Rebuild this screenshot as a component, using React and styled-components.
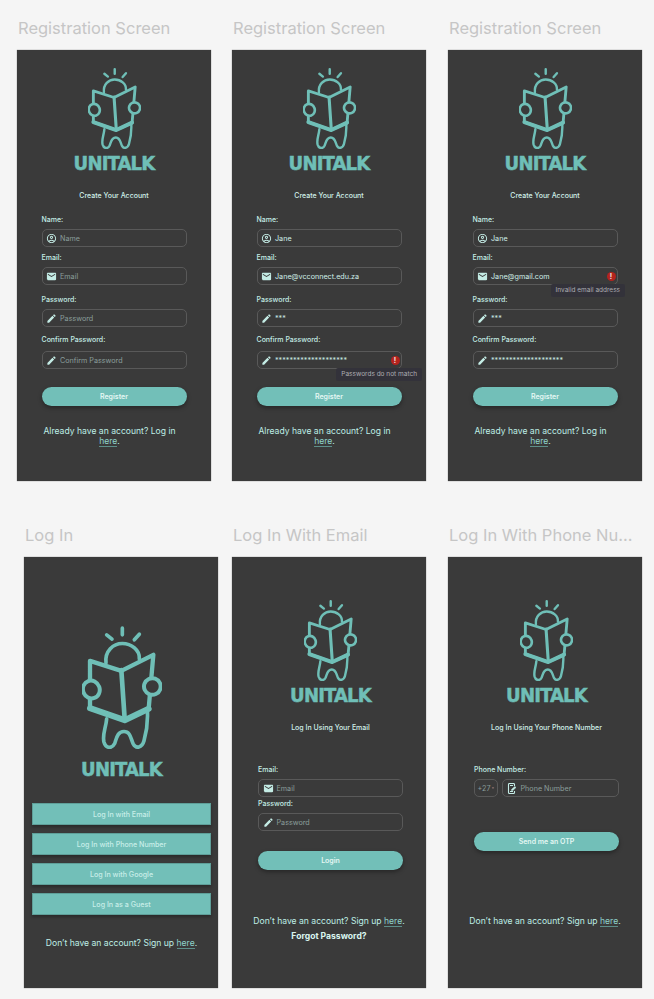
import React from "react";
import styled, { createGlobalStyle } from "styled-components";
import { MdOutlineAccountCircle, MdEmail, MdEdit, MdArrowDropDown } from "react-icons/md";

const GlobalStyle = createGlobalStyle`
  html, body {
    margin: 0;
    background: #f5f5f5;
  }
  body {
    font-family: "Inter", "Liberation Sans", sans-serif;
  }
`;

const Page = styled.div`
  width: 654px;
  height: 999px;
  overflow: hidden;
  padding-top: 17px;
  box-sizing: border-box;
`;

const Row = styled.div`
  display: grid;
  grid-template-columns: 215px 216px 194px;
  padding-left: 17px;
  margin-bottom: 43px;
`;

const Column = styled.section`
  width: 194px;
  margin-left: ${(p) => p.$indent || 0}px;
`;

const Title = styled.h2`
  margin: 0 0 11px 1px;
  height: 22px;
  font-size: 16.5px;
  line-height: 22px;
  font-weight: 400;
  color: #c6c6c6;
  white-space: nowrap;
`;

const Card = styled.div`
  height: 431px;
  box-sizing: border-box;
  background: #3a3a3a;
  box-shadow: 0 0 1px rgba(0, 0, 0, 0.55);
  padding: ${(p) => p.$top}px ${(p) => p.$right}px 0 ${(p) => p.$left}px;
  display: flex;
  flex-direction: column;
`;

const Brand = styled.div`
  display: flex;
  flex-direction: column;
  align-items: center;
`;

const LogoMark = styled.svg`
  width: ${(p) => p.$width}px;
  height: ${(p) => Math.round(p.$width * 1.533)}px;
  display: block;
`;

const Wordmark = styled.div`
  margin-top: ${(p) => p.$gap}px;
  height: 15px;
  font-family: "DejaVu Sans Condensed", "DejaVu Sans", sans-serif;
  font-stretch: condensed;
  font-weight: 700;
  font-size: 20px;
  line-height: 15px;
  letter-spacing: -0.8px;
  color: #6fbfb7;
  -webkit-text-stroke: 0.5px #6fbfb7;
  white-space: nowrap;
`;

const Heading = styled.h3`
  margin: 19px 0 0;
  padding-top: 1px;
  height: 9px;
  font-size: 7px;
  line-height: 10px;
  font-weight: 500;
  text-align: center;
  color: #d0efe9;
`;

const Field = styled.div`
  position: relative;
  margin-top: ${(p) => p.$top}px;
`;

const Label = styled.label`
  display: block;
  padding-top: 1px;
  font-size: 7px;
  line-height: 10px;
  font-weight: 500;
  color: #c4ece5;
  margin-bottom: ${(p) => (p.$gap ?? 5) - 1}px;
`;

const InputBox = styled.div`
  flex: 1;
  height: 18px;
  box-sizing: border-box;
  border: 1px solid #595959;
  border-radius: 5px;
  display: flex;
  align-items: center;
  padding: 0 1px 0 3.5px;
  font-size: 7.2px;
  color: ${(p) => (p.$filled ? "#d0efe9" : "#8a9e9a")};
  svg {
    flex: none;
    width: 11px;
    height: 11px;
    color: #c4ece5;
    margin-right: 3px;
  }
`;

const InputText = styled.span`
  flex: 1;
  white-space: nowrap;
`;

const ErrorBadge = styled.span`
  flex: none;
  width: 9px;
  height: 9px;
  border-radius: 50%;
  background: #b3231e;
  color: #f4e6e4;
  font-size: 7px;
  font-weight: 700;
  line-height: 9px;
  text-align: center;
`;

const Tooltip = styled.div`
  position: absolute;
  top: ${(p) => p.$top}px;
  right: ${(p) => p.$right}px;
  height: 13px;
  padding: 0 5px;
  border-radius: 2px;
  background: #33323a;
  color: #adadb2;
  font-size: 6.5px;
  line-height: 13px;
  white-space: nowrap;
`;

const PhoneRow = styled.div`
  display: flex;
  gap: 4px;
`;

const CodeBox = styled.div`
  width: 24px;
  height: 18px;
  box-sizing: border-box;
  border: 1px solid #595959;
  border-radius: 5px;
  display: flex;
  align-items: center;
  justify-content: center;
  font-size: 7.2px;
  color: #8a9e9a;
  svg {
    flex: none;
    width: 6px;
    height: 6px;
    margin-right: -2px;
    color: #b98f8a;
  }
`;

const PillButton = styled.button`
  display: block;
  width: 100%;
  height: 19px;
  margin-top: ${(p) => p.$top}px;
  padding: 0;
  border: 0;
  border-radius: 9.5px;
  background: #72bfb8;
  box-shadow: 0 2px 4px rgba(0, 0, 0, 0.35);
  color: #e4f7f3;
  font-family: inherit;
  font-size: 7px;
  font-weight: 600;
`;

const SquareButton = styled.button`
  display: block;
  width: 100%;
  height: 22px;
  padding: 0;
  border: 1px solid #5f9f99;
  background: #72bfb8;
  box-shadow: 0 2px 3px rgba(0, 0, 0, 0.3);
  color: #c8eee8;
  font-family: inherit;
  font-size: 7.1px;
  font-weight: 500;
`;

const ButtonStack = styled.div`
  display: flex;
  flex-direction: column;
  gap: 8px;
  margin-top: 26px;
`;

const FootNote = styled.p`
  margin: ${(p) => p.$top}px ${(p) => p.$right || 0}px 0 ${(p) => p.$left || 0}px;
  padding-top: 1px;
  height: 19px;
  font-size: 8.6px;
  line-height: 10px;
  text-align: center;
  color: #bfeee6;
`;

const HereLink = styled.a`
  color: #8fd3ca;
  border-bottom: 1px solid #5e8f8a;
`;

const ForgotLink = styled.p`
  margin: -4px 0 0 -3px;
  font-size: 8.6px;
  line-height: 10px;
  font-weight: 700;
  text-align: center;
  color: #d9f5ef;
`;

const PhoneIcon = () => (
  <svg viewBox="0 0 11 11" fill="none" stroke="currentColor" strokeWidth="1.1">
    <path d="M7.5 3V1.5C7.5 0.9 7.1 0.5 6.5 0.5H2.5C1.9 0.5 1.5 0.9 1.5 1.5V9.5C1.5 10.1 1.9 10.5 2.5 10.5H6.5C7.1 10.5 7.5 10.1 7.5 9.5V8" />
    <path d="M3 2.5H6M3 8.5H6" />
    <path d="M4.5 6.5L7.8 3.4L9 4.5L5.7 7.6H4.5Z" fill="currentColor" strokeWidth="0.5" />
  </svg>
);

const Logo = ({ width = 53, gap = 7 }) => (
  <Brand>
    <LogoMark $width={width} viewBox="66 14 240 368" fill="none" stroke="#6fbfb7" strokeLinecap="round" strokeLinejoin="round">
      <path d="M187 20V40M140 40L156 53M238 38L223 55" strokeWidth="11" />
      <path d="M138 124C134 88 160 66 187 66C214 66 240 86 238 112" strokeWidth="11" />
      <path d="M140 292C138 318 126 340 132 362C138 382 156 382 164 366C170 350 172 330 192 330C212 330 212 352 220 368C228 382 246 380 252 358C260 330 264 296 262 266" strokeWidth="11" />
      <path d="M90 118L184 148L280 100L266 262L194 296L90 260Z" fill="#3a3a3a" strokeWidth="13" />
      <path d="M184 146L194 292" strokeWidth="14" />
      <path d="M90 260L194 296L266 262" strokeWidth="18" />
      <ellipse cx="94" cy="204" rx="25" ry="27" transform="rotate(-20 94 204)" fill="#3a3a3a" strokeWidth="12" />
      <ellipse cx="277" cy="195" rx="25" ry="25" transform="rotate(20 277 195)" fill="#3a3a3a" strokeWidth="12" />
    </LogoMark>
    <Wordmark $gap={gap}>UNITALK</Wordmark>
  </Brand>
);

const Input = ({ icon, text, filled, error }) => (
  <InputBox $filled={filled}>
    {icon}
    <InputText>{text}</InputText>
    {error && <ErrorBadge>!</ErrorBadge>}
  </InputBox>
);

const RegisterScreen = ({ values = {}, emailError, passwordError }) => (
  <Column>
    <Title>Registration Screen</Title>
    <Card $top={18} $left={24.5} $right={24.5}>
      <Logo />
      <Heading>Create Your Account</Heading>
      <Field $top={14}>
        <Label>Name:</Label>
        <Input icon={<MdOutlineAccountCircle />} text={values.name || "Name"} filled={!!values.name} />
      </Field>
      <Field $top={5}>
        <Label>Email:</Label>
        <Input icon={<MdEmail />} text={values.email || "Email"} filled={!!values.email} error={emailError} />
        {emailError && <Tooltip $top={32} $right={-7.5}>Invalid email address</Tooltip>}
      </Field>
      <Field $top={9}>
        <Label>Password:</Label>
        <Input icon={<MdEdit />} text={values.password || "Password"} filled={!!values.password} />
      </Field>
      <Field $top={7}>
        <Label $gap={7}>Confirm Password:</Label>
        <Input icon={<MdEdit />} text={values.confirm || "Confirm Password"} filled={!!values.confirm} error={passwordError} />
        {passwordError && <Tooltip $top={34} $right={-20.5}>Passwords do not match</Tooltip>}
      </Field>
      <PillButton $top={18}>Register</PillButton>
      <FootNote $top={19} $left={-9}>
        Already have an account? Log in <HereLink>here</HereLink>.
      </FootNote>
    </Card>
  </Column>
);

const App = () => {
  const jane = { name: "Jane", password: "***", confirm: "********************" };
  return (
    <Page>
      <GlobalStyle />
      <Row>
        <RegisterScreen />
        <RegisterScreen values={{ ...jane, email: "Jane@vcconnect.edu.za" }} passwordError />
        <RegisterScreen values={{ ...jane, email: "Jane@gmail.com" }} emailError />
      </Row>
      <Row>
        <Column $indent={7}>
          <Title>Log In</Title>
          <Card $top={69} $left={8} $right={7}>
            <Logo width={80} gap={13} />
            <ButtonStack>
              <SquareButton>Log In with Email</SquareButton>
              <SquareButton>Log In with Phone Number</SquareButton>
              <SquareButton>Log In with Google</SquareButton>
              <SquareButton>Log In as a Guest</SquareButton>
            </ButtonStack>
            <FootNote $top={22}>
              Don’t have an account? Sign up <HereLink>here</HereLink>.
            </FootNote>
          </Card>
        </Column>
        <Column>
          <Title>Log In With Email</Title>
          <Card $top={43} $left={26} $right={23}>
            <Logo />
            <Heading>Log In Using Your Email</Heading>
            <Field $top={32}>
              <Label>Email:</Label>
              <Input icon={<MdEmail />} text="Email" />
            </Field>
            <Field $top={1}>
              <Label>Password:</Label>
              <Input icon={<MdEdit />} text="Password" />
            </Field>
            <PillButton $top={20}>Login</PillButton>
            <FootNote $top={45} $left={-13} $right={-10}>
              Don’t have an account? Sign up <HereLink>here</HereLink>.
            </FootNote>
            <ForgotLink>Forgot Password?</ForgotLink>
          </Card>
        </Column>
        <Column>
          <Title>Log In With Phone Nu...</Title>
          <Card $top={43} $left={26} $right={23}>
            <Logo />
            <Heading>Log In Using Your Phone Number</Heading>
            <Field $top={32}>
              <Label>Phone Number:</Label>
              <PhoneRow>
                <CodeBox>+27<MdArrowDropDown /></CodeBox>
                <Input icon={<PhoneIcon />} text="Phone Number" />
              </PhoneRow>
            </Field>
            <PillButton $top={35}>Send me an OTP</PillButton>
            <FootNote $top={64} $left={-13} $right={-10}>
              Don’t have an account? Sign up <HereLink>here</HereLink>.
            </FootNote>
          </Card>
        </Column>
      </Row>
    </Page>
  );
};

export default App;
